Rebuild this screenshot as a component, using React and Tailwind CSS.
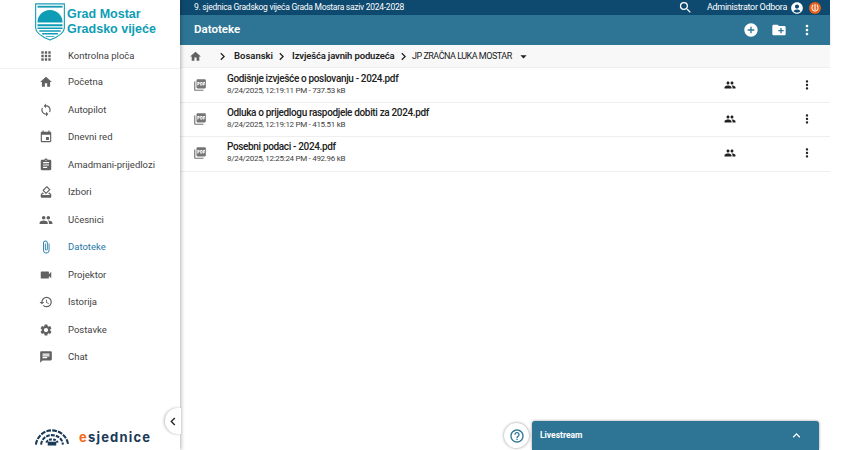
import React from "react";
import {
  MdApps, MdHome, MdSync, MdEvent, MdAssignment, MdHowToVote, MdPeople, MdAttachFile, MdVideocam, MdHistory,
  MdSettings, MdChat, MdSearch, MdAccountCircle, MdAddCircle, MdCreateNewFolder, MdMoreVert, MdChevronRight,
  MdArrowDropDown, MdPictureAsPdf, MdExpandLess, MdHelpOutline, MdChevronLeft,
} from "react-icons/md";

const nav = [
  ["Početna", MdHome],
  ["Autopilot", MdSync],
  ["Dnevni red", MdEvent],
  ["Amadmani-prijedlozi", MdAssignment],
  ["Izbori", MdHowToVote],
  ["Učesnici", MdPeople],
  ["Datoteke", MdAttachFile, true],
  ["Projektor", MdVideocam],
  ["Istorija", MdHistory],
  ["Postavke", MdSettings],
  ["Chat", MdChat],
];

const files = [
  ["Godišnje izvješće o poslovanju - 2024.pdf", "8/24/2025, 12:19:11 PM - 737.53 kB"],
  ["Odluka o prijedlogu raspodjele dobiti za 2024.pdf", "8/24/2025, 12:19:12 PM - 415.51 kB"],
  ["Posebni podaci - 2024.pdf", "8/24/2025, 12:25:24 PM - 492.96 kB"],
];

function Shield() {
  return (
    <svg width="32" height="38" viewBox="0 0 33 41" className="shrink-0">
      <path d="M1 1H32V27C32 33 24 37 16.5 40C9 37 1 33 1 27Z" fill="#fff" stroke="#1a9cb4" strokeWidth="1.2" />
      <path d="M3 3H30V5H3Z" fill="#1a9cb4" />
      <path d="M3 21A13.5 13.5 0 0 1 30 21Z" fill="#0e9db5" />
      <path d="M3 23H30V25H3ZM3 26.5H30V28H3ZM5 29.5H28V31H5ZM8 32.5H25V34H8ZM12 35.5H21V36.5H12Z" fill="#0e9db5" />
    </svg>
  );
}

function Parliament() {
  return (
    <svg width="36" height="18" viewBox="0 0 38 18" fill="none" stroke="#1b3a57" strokeWidth="2.2">
      <path d="M2 17C3 9 10 2 19 2C28 2 35 9 36 17" strokeDasharray="5 1.2" />
      <path d="M7.5 17C8 11 13 7 19 7C25 7 30 11 30.5 17" strokeDasharray="4 1.2" />
      <path d="M13 15C14 12.5 16 11.5 19 11.5C22 11.5 24 12.5 25 15" strokeDasharray="3 1.2" />
      <rect x="14.5" y="14" width="9" height="4" fill="#1b3a57" stroke="none" />
    </svg>
  );
}

function OrangeBadge() {
  return (
    <svg width="12" height="12" viewBox="0 0 12 12" fill="none" className="ml-[5px]">
      <circle cx="6" cy="6" r="6" fill="#e8601a" />
      <path d="M6 2.5V9.5M3.8 3.2C2.6 5 2.8 7.5 4.4 8.6M8.2 3.2C9.4 5 9.2 7.5 7.6 8.6" stroke="#fff" strokeWidth="1.1" strokeLinecap="round" />
    </svg>
  );
}

export default function App() {
  return (
    <div className="relative flex h-[450px] w-[860px] overflow-hidden bg-white font-['Roboto','Noto_Sans',sans-serif] text-[#212121]">
      {/* Sidebar */}
      <aside className="relative z-10 flex h-full w-[180px] shrink-0 flex-col bg-white shadow-[1px_0_4px_rgba(0,0,0,0.3)]">
        <div className="flex h-[42px] items-start gap-[1px] pl-[34px] pt-[3px]">
          <Shield />
          <div className="whitespace-nowrap pt-[4px] font-['Liberation_Sans',sans-serif] text-[12.5px] font-bold leading-[15px] text-[#0e9db5]">
            <div>Grad Mostar</div>
            <div>Gradsko vijeće</div>
          </div>
        </div>
        <div className="mt-[1px] flex h-[26px] items-center border-b border-[#f0f0f0] pl-[30px] pt-[1px]">
          <MdApps className="ml-[9px] h-[14px] w-[14px] text-[#616161]" />
          <span className="ml-[15px] text-[9.5px] text-[#424242]">Kontrolna ploča</span>
        </div>
        <nav className="flex flex-col">
          {nav.map(([label, Icon, active]) => (
            <div key={label} className="flex h-[27.5px] items-center pb-[1px] pl-[39px]">
              <Icon className={`h-[14px] w-[14px] ${active ? "text-[#1f77a8]" : "text-[#616161]"}`} />
              <span className={`ml-[15px] text-[9.5px] ${active ? "text-[#1f77a8]" : "text-[#424242]"}`}>{label}</span>
            </div>
          ))}
        </nav>
        <div className="mt-auto flex items-center gap-[9px] pb-[4px] pl-[34px]">
          <Parliament />
          <div className="font-['Inter',sans-serif] text-[13px] font-bold leading-[18px] tracking-[1.2px] text-[#1b3a57]">
            <span className="text-[#f26a1b]">e</span>sjednice
          </div>
        </div>
        <button className="absolute bottom-[16px] right-[-1px] flex h-[26px] w-[16px] items-center justify-center rounded-l-full bg-white shadow-[-1px_0_3px_rgba(0,0,0,0.25)]">
          <MdChevronLeft className="h-[17px] w-[17px] text-[#212121]" />
        </button>
      </aside>

      {/* Main */}
      <main className="flex h-full w-[650px] shrink-0 flex-col">
        <div className="flex h-[15px] items-center justify-between bg-[#0e4a6f] pl-[14px] pr-[9px] text-white">
          <span className="text-[8.5px] tracking-[-0.27px]">9. sjednica Gradskog vijeća Grada Mostara saziv 2024-2028</span>
          <div className="flex items-center">
            <MdSearch className="h-[15px] w-[15px]" />
            <span className="ml-[14px] text-[9px] tracking-[-0.3px]">Administrator Odbora</span>
            <MdAccountCircle className="ml-[3px] h-[14px] w-[14px]" />
            <OrangeBadge />
          </div>
        </div>
        <div className="flex h-[30px] items-center justify-between bg-[#2e7595] pl-[14px] pr-[15px] text-white shadow-[0_1px_2px_rgba(0,0,0,0.2)]">
          <span className="text-[11.5px] font-semibold">Datoteke</span>
          <div className="flex items-center gap-[12px]">
            <MdAddCircle className="h-[16px] w-[16px]" />
            <MdCreateNewFolder className="h-[16px] w-[16px]" />
            <MdMoreVert className="h-[16px] w-[16px]" />
          </div>
        </div>
        <div className="flex h-[23px] items-center border-b border-[#eeeeee] bg-[#f8f8f8] pl-[9px] text-[9.5px]">
          <MdHome className="h-[13px] w-[13px] text-[#616161]" />
          <MdChevronRight className="ml-[13px] h-[15px] w-[15px] text-[#212121]" />
          <span className="ml-[4px] font-semibold">Bosanski</span>
          <MdChevronRight className="ml-[1px] h-[15px] w-[15px] text-[#212121]" />
          <span className="ml-[3px] font-semibold tracking-[-0.15px]">Izvješća javnih poduzeća</span>
          <MdChevronRight className="ml-[1px] h-[15px] w-[15px] text-[#212121]" />
          <span className="ml-[1.5px] pt-[2px] text-[9px] tracking-[-0.5px] text-[#212121]">JP ZRAČNA LUKA MOSTAR</span>
          <MdArrowDropDown className="ml-[4.5px] h-[15px] w-[15px] text-[#212121]" />
        </div>
        <div className="flex flex-col pt-[1px]">
          {files.map(([name, meta]) => (
            <div key={name} className="flex h-[34.2px] items-center border-b border-[#eeeeee] pb-[2px] pl-[13px]">
              <MdPictureAsPdf className="h-[14px] w-[14px] shrink-0 text-[#757575]" />
              <div className="ml-[20px] min-w-0 flex-1 leading-none">
                <div className="text-[10px] font-medium leading-[13px] tracking-[-0.35px]">{name}</div>
                <div className="text-[8px] leading-[12px] tracking-[-0.3px] text-[#424242]">{meta}</div>
              </div>
              <MdPeople className="h-[12px] w-[12px] shrink-0 text-[#212121]" />
              <MdMoreVert className="ml-[64px] mr-[16px] h-[14px] w-[14px] shrink-0 text-[#212121]" />
            </div>
          ))}
        </div>
      </main>

      {/* Floating help + livestream */}
      <button className="absolute bottom-[2px] left-[504px] flex h-[25px] w-[25px] items-center justify-center rounded-full bg-white shadow-[0_0_3px_rgba(0,0,0,0.45)]">
        <MdHelpOutline className="h-[16px] w-[16px] text-[#2e7595]" />
      </button>
      <div className="absolute bottom-0 left-[532px] flex h-[29px] w-[287px] items-center justify-between rounded-t-[3px] bg-[#2e7595] pl-[8px] pr-[15px] text-white shadow-[0_0_3px_rgba(0,0,0,0.4)]">
        <span className="text-[8.5px] font-bold">Livestream</span>
        <MdExpandLess className="h-[15px] w-[15px]" />
      </div>
    </div>
  );
}
